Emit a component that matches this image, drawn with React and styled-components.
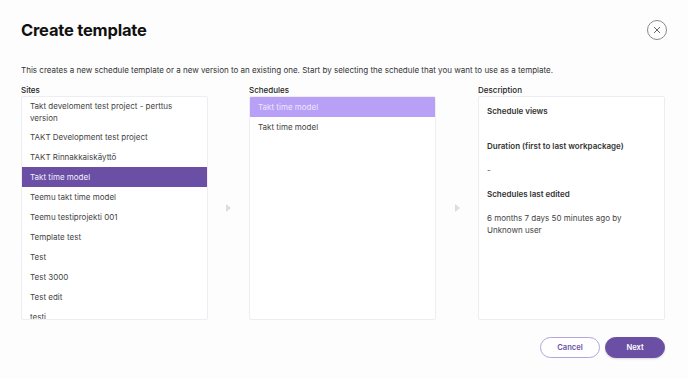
import React, { useState } from 'react';
import styled, { createGlobalStyle } from 'styled-components';

const GlobalStyle = createGlobalStyle`
  html, body {
    margin: 0;
    padding: 0;
    background: #fdfdfe;
    font-family: Inter, "Noto Sans", sans-serif;
  }
`;

const Modal = styled.div`
  width: 688px;
  height: 379px;
  box-sizing: border-box;
  padding: 20px 23px 0 21px;
  display: flex;
  flex-direction: column;
  color: #222;
`;

const Header = styled.div`
  display: flex;
  justify-content: space-between;
  align-items: center;
`;

const Title = styled.h1`
  margin: 0;
  font-size: 16.5px;
  font-weight: 700;
  letter-spacing: -0.2px;
  color: #111;
`;

const CloseButton = styled.button`
  width: 20px;
  height: 20px;
  border-radius: 50%;
  border: 1px solid #8a8a8a;
  background: transparent;
  padding: 0;
  display: flex;
  align-items: center;
  justify-content: center;
  cursor: pointer;
  margin-right: -2px;
`;

const Intro = styled.p`
  margin: 24px 0 8px;
  font-size: 8px;
  line-height: 12px;
  color: #333;
`;

const Columns = styled.div`
  display: grid;
  grid-template-columns: 187px 41px 187px 42px 187px;
  grid-template-rows: 12px 224px;
`;

const Label = styled.div`
  font-size: 8px;
  line-height: 12px;
  font-weight: 500;
  color: #222;
  grid-column: ${(p) => p.col};
`;

const Box = styled.div`
  border: 1px solid #ededf3;
  border-radius: 2px;
  background: #fff;
  overflow: hidden;
  box-sizing: border-box;
`;

const Item = styled.div`
  min-height: 20px;
  box-sizing: border-box;
  display: flex;
  align-items: center;
  padding: 3px 8px;
  font-size: 8px;
  line-height: 12px;
  color: ${(p) => (p.selected ? p.selectedColor : '#444')};
  background: ${(p) => (p.selected ? p.selectedBg : 'transparent')};
  cursor: pointer;
`;

const Arrow = styled.div`
  display: flex;
  align-items: center;
  justify-content: center;
`;

const Description = styled(Box)`
  padding: 8px 8px;
  font-size: 8px;
  line-height: 12px;
  color: #444;
`;

const DescHeading = styled.div`
  font-weight: 600;
  color: #333;
  margin-bottom: ${(p) => p.gap}px;
`;

const DescText = styled.div`
  margin-bottom: ${(p) => p.gap}px;
`;

const Footer = styled.div`
  display: flex;
  justify-content: flex-end;
  gap: 5px;
  margin-top: 17px;
`;

const Button = styled.button`
  width: ${(p) => p.w}px;
  height: 21px;
  border-radius: 11px;
  font-family: Inter, "Noto Sans", sans-serif;
  font-size: 7.6px;
  font-weight: 600;
  cursor: pointer;
  border: 1px solid ${(p) => (p.primary ? '#6a4fa4' : '#b4a3dd')};
  background: ${(p) => (p.primary ? '#6a4fa4' : '#fff')};
  color: ${(p) => (p.primary ? '#fff' : '#6b53a8')};
  box-shadow: ${(p) => (p.primary ? '0 1px 2px rgba(0,0,0,0.15)' : 'none')};
`;

const sites = [
  'Takt develoment test project - perttus version',
  'TAKT Development test project',
  'TAKT Rinnakkaiskäyttö',
  'Takt time model',
  'Teemu takt time model',
  'Teemu testiprojekti 001',
  'Template test',
  'Test',
  'Test 3000',
  'Test edit',
  'testi',
];

const schedules = ['Takt time model', 'Takt time model'];

const Chevron = () => (
  <svg width="5" height="8" viewBox="0 0 5 8">
    <path d="M0 0 L5 4 L0 8 Z" fill="#dcdce2" />
  </svg>
);

export default function App() {
  const [site, setSite] = useState(3);
  const [schedule, setSchedule] = useState(0);

  return (
    <>
      <GlobalStyle />
      <Modal>
        <Header>
          <Title>Create template</Title>
          <CloseButton aria-label="Close">
            <svg width="8" height="8" viewBox="0 0 8 8">
              <path d="M1 1 L7 7 M7 1 L1 7" stroke="#555" strokeWidth="0.9" />
            </svg>
          </CloseButton>
        </Header>
        <Intro>
          This creates a new schedule template or a new version to an existing one. Start by
          selecting the schedule that you want to use as a template.
        </Intro>
        <Columns>
          <Label col={1}>Sites</Label>
          <Label col={3}>Schedules</Label>
          <Label col={5}>Description</Label>
          <Box>
            {sites.map((s, i) => (
              <Item
                key={s}
                selected={i === site}
                selectedBg="#6a4fa4"
                selectedColor="#f3efff"
                onClick={() => setSite(i)}
              >
                {s}
              </Item>
            ))}
          </Box>
          <Arrow>
            <Chevron />
          </Arrow>
          <Box>
            {schedules.map((s, i) => (
              <Item
                key={i}
                selected={i === schedule}
                selectedBg="#b7a0f5"
                selectedColor="#ece6ff"
                onClick={() => setSchedule(i)}
              >
                {s}
              </Item>
            ))}
          </Box>
          <Arrow>
            <Chevron />
          </Arrow>
          <Description>
            <DescHeading gap={23}>Schedule views</DescHeading>
            <DescHeading gap={12}>Duration (first to last workpackage)</DescHeading>
            <DescText gap={12}>-</DescText>
            <DescHeading gap={12}>Schedules last edited</DescHeading>
            <DescText gap={0}>6 months 7 days 50 minutes ago by Unknown user</DescText>
          </Description>
        </Columns>
        <Footer>
          <Button w={60}>Cancel</Button>
          <Button w={60} primary>
            Next
          </Button>
        </Footer>
      </Modal>
    </>
  );
}
